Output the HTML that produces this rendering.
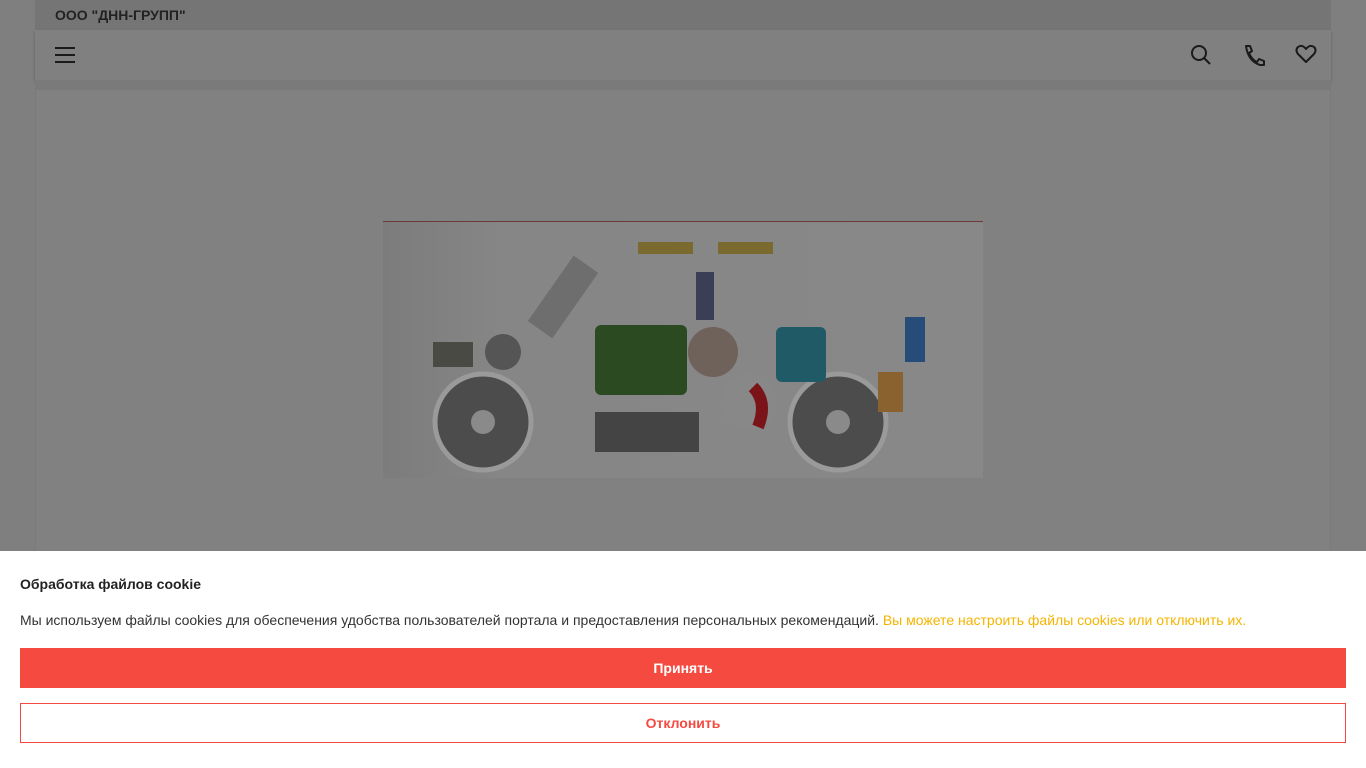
<!DOCTYPE html>
<html><head><meta charset="utf-8"><style>
*{margin:0;padding:0;box-sizing:border-box}
body{width:1366px;height:768px;overflow:hidden;background:#7f7f7f;font-family:"Liberation Sans",Arial,sans-serif;position:relative}
.top{position:absolute;left:35px;top:0;width:1296px;height:30px;background:#757576}
.top span{position:absolute;left:20px;top:7px;font-size:14px;font-weight:bold;color:#222}
.hdr{position:absolute;left:35px;top:30px;width:1296px;height:50px;background:#808080;box-shadow:0 2px 3px rgba(0,0,0,.25)}
.gap{position:absolute;left:35px;top:80px;width:1296px;height:10px;background:#7a7a7a}
.main{position:absolute;left:35px;top:90px;width:1296px;height:470px;background:#818181;border-left:1px solid #7a7a7a;border-right:1px solid #7a7a7a}
.pic{position:absolute;left:383px;top:221px;width:600px;height:257px;background:linear-gradient(90deg,#7c7c7c 0,#868686 20%,#888 100%);border-top:1px solid #6a3a3a}
.cookie{position:absolute;left:0;top:551px;width:1366px;height:217px;background:#fff}
.cookie h3{position:absolute;left:20px;top:25px;font-size:14px;color:#222}
.cookie p{position:absolute;left:20px;top:61px;font-size:14px;color:#333}
.cookie p a{color:#f5b400;text-decoration:none}
.b1{position:absolute;left:20px;top:97px;width:1326px;height:40px;background:#f44a40;color:#fff;font-size:14px;font-weight:bold;text-align:center;line-height:40px}
.b2{position:absolute;left:20px;top:152px;width:1326px;height:40px;border:1px solid #f44a40;color:#f44a40;font-size:14px;font-weight:bold;text-align:center;line-height:38px}
</style></head><body>
<div class="top"><span>ООО "ДНН-ГРУПП"</span></div>
<div class="hdr">
<svg style="position:absolute;left:20px;top:16px" width="20" height="18"><path d="M0 2H20M0 9H20M0 16H20" stroke="#1a1a1a" stroke-width="2"/></svg>
<svg style="position:absolute;left:1155px;top:14px" width="22" height="22" fill="none" stroke="#1a1a1a" stroke-width="2"><circle cx="9" cy="9" r="7"/><path d="M14 14L20 20"/></svg>
<svg style="position:absolute;left:1209px;top:14px" width="22" height="22" fill="none" stroke="#1a1a1a" stroke-width="2" stroke-linejoin="round"><path d="M2 2H6L8 7L5 9Q8 16 13 18L15 15L20 17V21H16Q4 17 2 2Z"/></svg>
<svg style="position:absolute;left:1260px;top:14px" width="22" height="20" fill="none" stroke="#1a1a1a" stroke-width="2" stroke-linejoin="round"><path d="M11 18L3 10Q0 6 3 3Q7 0 11 5Q15 0 19 3Q22 6 19 10Z"/></svg>
</div>
<div class="gap"></div>
<div class="main"></div>
<div class="pic">
<svg width="600" height="257">
<circle cx="100" cy="200" r="48" fill="#4c4c4c" stroke="#9a9a9a" stroke-width="5"/><circle cx="100" cy="200" r="12" fill="#8a8a8a"/>
<circle cx="455" cy="200" r="48" fill="#4c4c4c" stroke="#9a9a9a" stroke-width="5"/><circle cx="455" cy="200" r="12" fill="#8a8a8a"/>
<rect x="212" y="190" width="104" height="40" fill="#444"/>
<rect x="212" y="103" width="92" height="70" rx="6" fill="#2c4a22"/>
<rect x="393" y="105" width="50" height="55" rx="6" fill="#1f5a66"/>
<circle cx="366" cy="180" r="28" fill="#888"/><path d="M370 165q15 15 5 40" stroke="#7a1418" stroke-width="12" fill="none"/>
<circle cx="330" cy="130" r="25" fill="#6e625a"/>
<rect x="522" y="95" width="20" height="45" fill="#264c7a"/>
<rect x="495" y="150" width="25" height="40" fill="#8a6230"/>
<rect x="165" y="35" width="30" height="80" fill="#6e6e6e" transform="rotate(35 180 75)"/>
<rect x="255" y="20" width="55" height="12" fill="#7a6a30"/><rect x="335" y="20" width="55" height="12" fill="#7a6a30"/>
<rect x="313" y="50" width="18" height="48" fill="#3a3f55"/>
<rect x="50" y="120" width="40" height="25" fill="#4a4a44"/><circle cx="120" cy="130" r="18" fill="#555"/>
</svg></div>
<div class="cookie">
<h3>Обработка файлов cookie</h3>
<p>Мы используем файлы cookies для обеспечения удобства пользователей портала и предоставления персональных рекомендаций. <a>Вы можете настроить файлы cookies или отключить их.</a></p>
<div class="b1">Принять</div>
<div class="b2">Отклонить</div>
</div>
</body></html>
